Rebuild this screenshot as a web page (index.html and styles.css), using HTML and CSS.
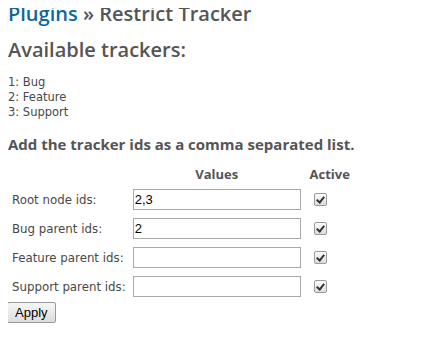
FILE: index.html
```
<!DOCTYPE html>
<html>
<head>
<meta charset="utf-8">
<link rel="stylesheet" href="styles.css">
</head>
<body>
<h2 class="title"><a class="crumb" href="#">Plugins</a> » Restrict Tracker</h2>
<h2 class="subtitle">Available trackers:</h2>
<div class="trackers">
  <div>1: Bug</div>
  <div>2: Feature</div>
  <div>3: Support</div>
</div>
<h3 class="hint">Add the tracker ids as a comma separated list.</h3>
<form class="settings">
  <table class="grid">
    <thead>
      <tr><th class="col-label"></th><th class="col-values">Values</th><th class="col-active">Active</th></tr>
    </thead>
    <tbody>
      <tr><td class="lbl">Root node ids:</td><td><input class="ids" type="text" value="2,3"></td><td class="chk"><input type="checkbox" checked></td></tr>
      <tr><td class="lbl">Bug parent ids:</td><td><input class="ids" type="text" value="2"></td><td class="chk"><input type="checkbox" checked></td></tr>
      <tr><td class="lbl">Feature parent ids:</td><td><input class="ids" type="text" value=""></td><td class="chk"><input type="checkbox" checked></td></tr>
      <tr><td class="lbl">Support parent ids:</td><td><input class="ids" type="text" value=""></td><td class="chk"><input type="checkbox" checked></td></tr>
    </tbody>
  </table>
  <button class="apply" type="button">Apply</button>
</form>
</body>
</html>
```
FILE: styles.css
```
body {
  margin: 8px;
  font-family: "DejaVu Sans", Verdana, sans-serif;
  font-size: 11.5px;
  color: #484848;
  background: #fff;
}
.title, .subtitle {
  font-family: "Open Sans", "DejaVu Sans", sans-serif;
  font-size: 20px;
  font-weight: 600;
  color: #555;
  margin: 0;
  line-height: 24px;
}
.title { margin-top: -6px; }
.subtitle { margin-top: 12px; }
.crumb { color: #169; text-decoration: none; }
.trackers {
  margin-top: 13px;
  line-height: 15px;
}
.hint {
  font-family: "Open Sans", "DejaVu Sans", sans-serif;
  font-size: 15px;
  font-weight: 700;
  color: #555;
  margin: 15px 0 0;
  line-height: 18px;
}
.grid {
  border-collapse: collapse;
  margin-top: 10px;
}
.grid th {
  font-family: "Open Sans", "DejaVu Sans", sans-serif;
  font-size: 13px;
  font-weight: 700;
  color: #555;
  padding: 2px;
  height: 14px;
}
.grid .col-label { padding: 0; }
.grid .col-active { width: 50px; }
.grid td { padding: 4px 2px 4px 2px; height: 21px; }
.grid td.lbl { padding: 4px 5px 4px 4px; font-size: 11.8px; white-space: nowrap; }
.ids {
  width: 168px;
  height: 21px;
  box-sizing: border-box;
  border: 1px solid #a9a9a9;
  font-family: "Liberation Sans", Arial, sans-serif;
  font-size: 13px;
  color: #000;
  padding: 1px 1px;
  margin: 0;
  outline: none;
  display: block;
}
.grid td.chk { padding-left: 11px; }
.chk input {
  appearance: none;
  -webkit-appearance: none;
  margin: 0;
  width: 13px;
  height: 13px;
  border: 1px solid #9a9a9a;
  border-radius: 2px;
  background: linear-gradient(#fcfcfc, #dcdcdc);
  position: relative;
  display: block;
}
.chk input:checked::after {
  content: "";
  position: absolute;
  left: 3px;
  top: 1px;
  width: 3px;
  height: 6px;
  border: solid #333;
  border-width: 0 2px 2px 0;
  transform: rotate(40deg);
}
.apply {
  font-family: "Liberation Sans", Arial, sans-serif;
  font-size: 13px;
  padding: 1px 7px;
  margin: 1px 0 0 -1px;
  height: 21px;
  border: 1px solid #999;
  background: linear-gradient(#f6f6f6, #ddd);
  color: #000;
  border-radius: 2px;
}
```
